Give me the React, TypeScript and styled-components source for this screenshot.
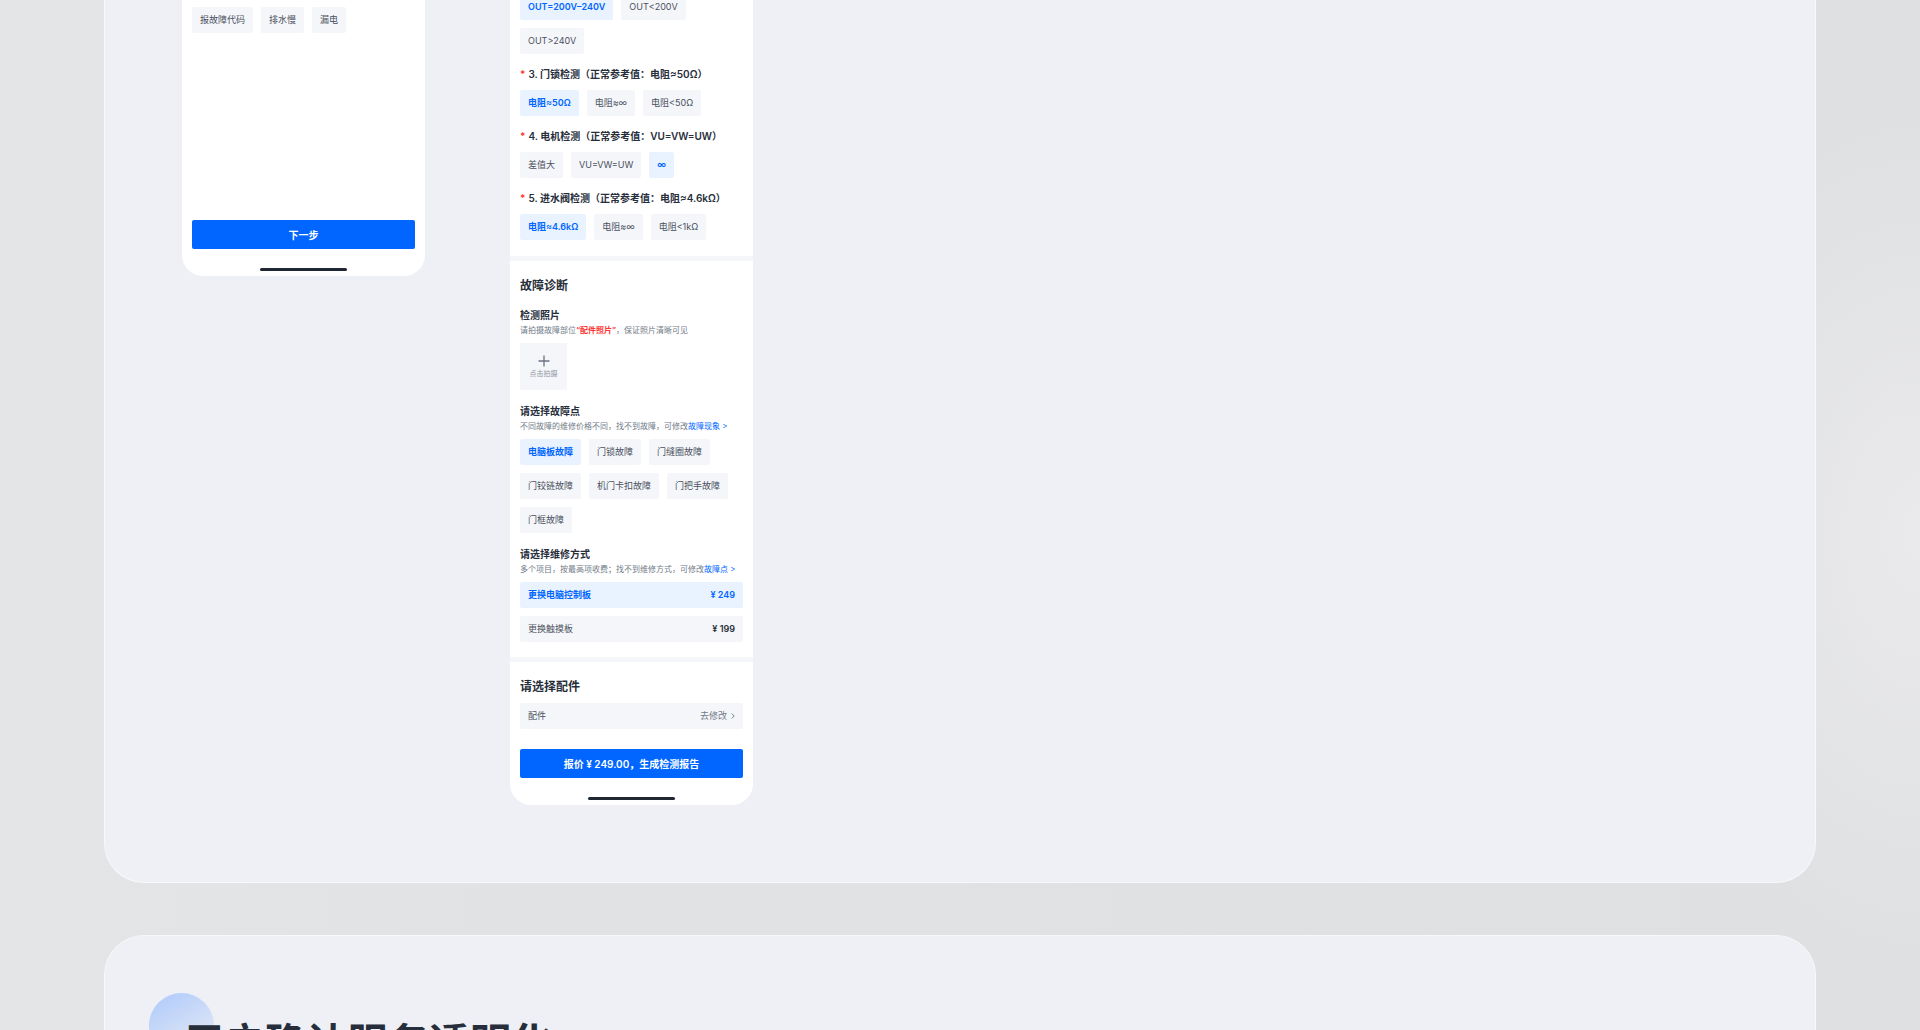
import React, { useState } from "react";
import styled, { createGlobalStyle } from "styled-components";

const color = {
  primary: "#0066ff",
  primarySoft: "#e9f2ff",
  fill: "#f5f6fa",
  panel: "#eff0f5",
  title: "#272e3b",
  text: "#4a515e",
  note: "#727b88",
  danger: "#ff3333",
};

const GlobalStyle = createGlobalStyle`
  *, *::before, *::after { box-sizing: border-box; }
  body {
    margin: 0;
    font-family: Inter, "Noto Sans CJK SC", sans-serif;
    color: ${color.title};
  }
  button { font-family: inherit; border: 0; cursor: pointer; }
  h2, h3, h4, p { margin: 0; }
`;

const Page = styled.main`
  height: 100vh;
  overflow: hidden;
  padding: 0 104px;
  background:
    radial-gradient(ellipse 260px 420px at 100% 52%, #eaeaec 0%, rgba(234, 234, 236, 0) 100%),
    linear-gradient(90deg, #e4e5e7 0%, #e1e2e4 30%, #e0e1e3 60%, #dfe0e2 100%);
`;

const Panel = styled.section<{ $continued?: boolean }>`
  background: ${color.panel};
  border: 1px solid #f7f8fa;
  border-radius: ${(p) => (p.$continued ? "0 0 40px 40px" : "40px")};
  border-top-width: ${(p) => (p.$continued ? 0 : 1)}px;
  margin-top: ${(p) => (p.$continued ? -6 : 52)}px;
  padding: ${(p) => (p.$continued ? "0 77px 77px" : "57px 44px")};
`;

const Phones = styled.div`
  display: flex;
  align-items: flex-start;
  gap: 85px;
`;

const Phone = styled.article`
  width: 243px;
  background: #fff;
  border-radius: 0 0 21px 21px;
  padding-bottom: 5px;
`;

const Block = styled.section<{ $gap: number; $first?: boolean; $last?: boolean }>`
  display: flex;
  flex-direction: column;
  gap: ${(p) => p.$gap}px;
  padding: ${(p) => (p.$first ? 0 : 17)}px 10px ${(p) => (p.$last ? 0 : p.$first ? 16 : 15)}px;
`;

const Divider = styled.hr`
  height: 5px;
  margin: 0;
  border: 0;
  background: ${color.fill};
`;

const BlockTitle = styled.h3`
  font-size: 12px;
  line-height: 16px;
  font-weight: 600;
`;

const Group = styled.div<{ $gap: number }>`
  display: flex;
  flex-direction: column;
  gap: ${(p) => p.$gap}px;
`;

const GroupTitle = styled.h4`
  display: flex;
  gap: 3px;
  font-size: 10px;
  line-height: 16px;
  font-weight: 600;
  white-space: nowrap;
`;

const Star = styled.span`
  color: ${color.danger};
`;

const Note = styled.p`
  font-size: 8px;
  line-height: 14px;
  color: ${color.note};
  white-space: nowrap;
`;

const Warn = styled.strong`
  color: ${color.danger};
  font-weight: 600;
`;

const NoteLink = styled.a`
  color: ${color.primary};
  text-decoration: none;
`;

const Chips = styled.div`
  display: flex;
  flex-wrap: wrap;
  gap: 8px;
`;

const Chip = styled.button<{ $on: boolean }>`
  height: 26px;
  padding: 0 8px;
  border-radius: 2px;
  font-size: 9px;
  line-height: 14px;
  white-space: nowrap;
  background: ${(p) => (p.$on ? color.primarySoft : color.fill)};
  color: ${(p) => (p.$on ? color.primary : color.text)};
  font-weight: ${(p) => (p.$on ? 600 : 400)};
`;

const Row = styled(Chip)`
  width: 100%;
  display: flex;
  align-items: center;
  justify-content: space-between;
`;

const Price = styled.span<{ $on: boolean }>`
  color: ${(p) => (p.$on ? color.primary : color.title)};
  font-weight: 600;
`;

const RowAction = styled.span`
  display: flex;
  align-items: center;
  gap: 4px;
  color: ${color.note};
`;

const Upload = styled.button`
  width: 47px;
  height: 47px;
  padding: 0;
  display: flex;
  flex-direction: column;
  align-items: center;
  justify-content: center;
  gap: 2px;
  background: ${color.fill};
  color: #8d95a1;
  font-size: 7px;
  line-height: 10px;
`;

const Footer = styled.footer<{ $top: number }>`
  display: flex;
  flex-direction: column;
  align-items: center;
  gap: 19px;
  padding: ${(p) => p.$top}px 10px 0;
`;

const Submit = styled.button`
  width: 100%;
  height: 29px;
  padding: 0;
  border-radius: 2px;
  background: ${color.primary};
  color: #fff;
  font-size: 10px;
  font-weight: 600;
`;

const HomeBar = styled.div`
  width: 87px;
  height: 3px;
  border-radius: 2px;
  background: #1f2733;
`;

const Symptoms = styled(Chips)`
  padding: 13px 10px 0;
`;

const Heading = styled.h2`
  position: relative;
  padding: 20px 0 0 34px;
  font-size: 41px;
  line-height: 60px;
  font-weight: 700;
  white-space: nowrap;

  &::before {
    content: "";
    position: absolute;
    left: 0;
    top: 0;
    width: 65px;
    height: 65px;
    border-radius: 50%;
    background: linear-gradient(150deg, #adc9fb 0%, #e3e9f5 85%);
  }

  span { position: relative; }
`;

function ChipGroup({ items, initial }: { items: string[]; initial?: string }) {
  const [active, setActive] = useState(initial);
  return (
    <Chips>
      {items.map((item) => (
        <Chip
          key={item}
          type="button"
          aria-pressed={item === active}
          $on={item === active}
          onClick={() => setActive(item)}
        >
          {item}
        </Chip>
      ))}
    </Chips>
  );
}

const checks = [
  { title: "3. 门锁检测（正常参考值：电阻≈50Ω）", items: ["电阻≈50Ω", "电阻≈∞", "电阻<50Ω"], initial: "电阻≈50Ω" },
  { title: "4. 电机检测（正常参考值：VU=VW=UW）", items: ["差值大", "VU=VW=UW", "∞"], initial: "∞" },
  { title: "5. 进水阀检测（正常参考值：电阻≈4.6kΩ）", items: ["电阻≈4.6kΩ", "电阻≈∞", "电阻<1kΩ"], initial: "电阻≈4.6kΩ" },
];

const faults = ["电脑板故障", "门锁故障", "门缝圈故障", "门铰链故障", "机门卡扣故障", "门把手故障", "门框故障"];

const repairs = [
  { name: "更换电脑控制板", price: 249 },
  { name: "更换触摸板", price: 199 },
];

export default function App() {
  const [repair, setRepair] = useState(repairs[0].name);

  return (
    <>
      <GlobalStyle />
      <Page>
        <Panel $continued>
          <Phones>
            <Phone>
              <Symptoms>
                {["报故障代码", "排水慢", "漏电"].map((s) => (
                  <Chip key={s} type="button" $on={false}>{s}</Chip>
                ))}
              </Symptoms>
              <Footer $top={187}>
                <Submit type="button">下一步</Submit>
                <HomeBar />
              </Footer>
            </Phone>

            <Phone>
              <Block $gap={12} $first>
                <ChipGroup items={["OUT=200V–240V", "OUT<200V", "OUT>240V"]} initial="OUT=200V–240V" />
                {checks.map((c) => (
                  <Group key={c.title} $gap={8}>
                    <GroupTitle>
                      <Star>*</Star>
                      <span>{c.title}</span>
                    </GroupTitle>
                    <ChipGroup items={c.items} initial={c.initial} />
                  </Group>
                ))}
              </Block>
              <Divider />
              <Block $gap={13}>
                <BlockTitle>故障诊断</BlockTitle>
                <Group $gap={6}>
                  <div>
                    <GroupTitle>检测照片</GroupTitle>
                    <Note>
                      请拍摄故障部位<Warn>“配件照片”</Warn>，保证照片清晰可见
                    </Note>
                  </div>
                  <Upload type="button">
                    <svg width="12" height="12" viewBox="0 0 12 12" stroke="#6b7380" strokeWidth="1.3" aria-hidden="true">
                      <path d="M6 .5v11M.5 6h11" />
                    </svg>
                    点击拍摄
                  </Upload>
                </Group>
                <Group $gap={6}>
                  <div>
                    <GroupTitle>请选择故障点</GroupTitle>
                    <Note>
                      不同故障的维修价格不同，找不到故障，可修改<NoteLink href="#symptom">故障现象 &gt;</NoteLink>
                    </Note>
                  </div>
                  <ChipGroup items={faults} initial={faults[0]} />
                </Group>
                <Group $gap={6}>
                  <div>
                    <GroupTitle>请选择维修方式</GroupTitle>
                    <Note>
                      多个项目，按最高项收费；找不到维修方式，可修改<NoteLink href="#fault">故障点 &gt;</NoteLink>
                    </Note>
                  </div>
                  <Group $gap={8}>
                    {repairs.map((r) => (
                      <Row
                        key={r.name}
                        type="button"
                        aria-pressed={r.name === repair}
                        $on={r.name === repair}
                        onClick={() => setRepair(r.name)}
                      >
                        <span>{r.name}</span>
                        <Price $on={r.name === repair}>¥ {r.price}</Price>
                      </Row>
                    ))}
                  </Group>
                </Group>
              </Block>
              <Divider />
              <Block $gap={8} $last>
                <BlockTitle>请选择配件</BlockTitle>
                <Row type="button" $on={false}>
                  <span>配件</span>
                  <RowAction>
                    去修改
                    <svg width="4" height="6" viewBox="0 0 4 6" fill="none" stroke="#77808d" strokeWidth="1" aria-hidden="true">
                      <path d="M.7.5 3.2 3 .7 5.5" />
                    </svg>
                  </RowAction>
                </Row>
              </Block>
              <Footer $top={20}>
                <Submit type="button">报价 ¥ 249.00，生成检测报告</Submit>
                <HomeBar />
              </Footer>
            </Phone>
          </Phones>
        </Panel>

        <Panel>
          <Heading>
            <span>用户确认服务透明化</span>
          </Heading>
        </Panel>
      </Page>
    </>
  );
}
